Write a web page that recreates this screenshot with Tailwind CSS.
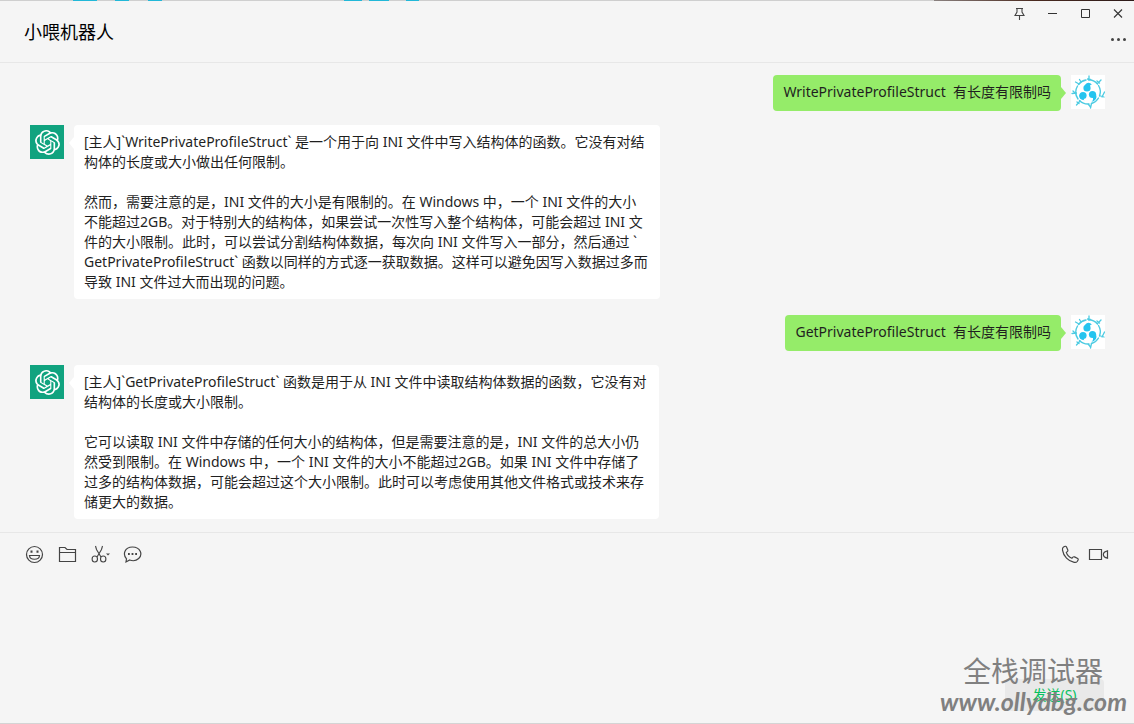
<!DOCTYPE html>
<html lang="zh-CN">
<head>
<meta charset="utf-8">
<title>小喂机器人</title>
<script src="https://cdn.jsdelivr.net/npm/@tailwindcss/browser@4"></script>
</head>
<body class="bg-[#f5f5f5] font-['Noto_Sans','Noto_Sans_CJK_SC',sans-serif] text-sm leading-5 text-[#1f1f1f]">
<svg class="absolute size-0" aria-hidden="true">
  <defs>
    <symbol id="knot" viewBox="0 0 24 24"><path fill="#fff" d="M22.2819 9.8211a5.9847 5.9847 0 0 0-.5157-4.9108 6.0462 6.0462 0 0 0-6.5098-2.9A6.0651 6.0651 0 0 0 4.9807 4.1818a5.9847 5.9847 0 0 0-3.9977 2.9 6.0462 6.0462 0 0 0 .7427 7.0966 5.98 5.98 0 0 0 .511 4.9107 6.051 6.051 0 0 0 6.5146 2.9001A5.9847 5.9847 0 0 0 13.2599 24a6.0557 6.0557 0 0 0 5.7718-4.2058 5.9894 5.9894 0 0 0 3.9977-2.9001 6.0557 6.0557 0 0 0-.7475-7.0729zm-9.022 12.6081a4.4755 4.4755 0 0 1-2.8764-1.0408l.1419-.0804 4.7783-2.7582a.7948.7948 0 0 0 .3927-.6813v-6.7369l2.02 1.1686a.071.071 0 0 1 .038.052v5.5826a4.504 4.504 0 0 1-4.4945 4.4944zm-9.6607-4.1254a4.4708 4.4708 0 0 1-.5346-3.0137l.142.0852 4.783 2.7582a.7712.7712 0 0 0 .7806 0l5.8428-3.3685v2.3324a.0804.0804 0 0 1-.0332.0615L9.74 19.9502a4.4992 4.4992 0 0 1-6.1408-1.6464zM2.3408 7.8956a4.485 4.485 0 0 1 2.3655-1.9728V11.6a.7664.7664 0 0 0 .3879.6765l5.8144 3.3543-2.0201 1.1685a.0757.0757 0 0 1-.071 0l-4.8303-2.7865A4.504 4.504 0 0 1 2.3408 7.872zm16.5963 3.8558L13.1038 8.364 15.1192 7.2a.0757.0757 0 0 1 .071 0l4.8303 2.7913a4.4944 4.4944 0 0 1-.6765 8.1042v-5.6772a.79.79 0 0 0-.407-.667zm2.0107-3.0231l-.142-.0852-4.7735-2.7818a.7759.7759 0 0 0-.7854 0L9.409 9.2297V6.8974a.0662.0662 0 0 1 .0284-.0615l4.8303-2.7866a4.4992 4.4992 0 0 1 6.6802 4.66zM8.3065 12.863l-2.02-1.1638a.0804.0804 0 0 1-.038-.0567V6.0742a4.4992 4.4992 0 0 1 7.3757-3.4537l-.142.0805L8.704 5.459a.7948.7948 0 0 0-.3927.6813zm1.0976-2.3654l2.602-1.4998 2.6069 1.4998v2.9994l-2.5974 1.4997-2.6067-1.4997Z"/></symbol>
    <symbol id="emblem" viewBox="0 0 34 34">
      <rect width="34" height="34" fill="#fff"/>
      <g fill="none" stroke="#4ccbe2" stroke-linecap="round">
        <path stroke-width="1.400" d="M7.500 9.500A12 12 0 0 1 15 5M17.500 4.800A12 12 0 0 1 26.500 9M27.500 10.500A12 12 0 0 1 28.500 21M27.500 23A12 12 0 0 1 20.500 28.500M18 29A12 12 0 0 1 8.500 25.500M7 24A12 12 0 0 1 6.500 11"/>
        <path stroke-width="1.300" d="M18 5V1M16.500 4L19.500 4.500M26.500 8.500L30 5M26 6L28.500 8M29.500 21L33 22M31 22L33.500 17M20.500 28.500L19.500 33M17.500 29.500L19.500 32M9 26L5.500 30M6 27L8 28.500M5.500 18L1 18.500M2 16L4 18M8 9L4.500 7M10 7L8.500 4.500"/>
      </g>
      <g fill="#25c4ef">
        <circle cx="16" cy="13" r="3.600"/><path d="M14 10Q17 6 21 9.500Q18 9.500 19 14Z"/>
        <circle cx="12" cy="20.500" r="3.600"/><path d="M8.400 19.500Q7.500 25 13.500 25.200Q12 24.500 13.500 22Z"/>
        <circle cx="21.500" cy="19.500" r="3.600"/><path d="M25 19Q27 25 20.500 27Q23 24.500 21.500 22Z"/>
      </g>
    </symbol>
  </defs>
</svg>
<div class="relative flex h-screen flex-col border-b border-[#d4d4d4]">
  <div class="flex h-px shrink-0 justify-between bg-[#cfcfcf]" aria-hidden="true">
    <svg class="h-px w-[420px]" viewBox="0 0 420 1" fill="#22b8d8"><path d="M73 0h24v1h-24zM115 0h14v1h-14zM148 0h14v1h-14zM344 0h18v1h-18zM369 0h20v1h-20zM406 0h13v1h-13z"/></svg>
    <div class="w-[200px] bg-linear-to-r from-[#8a8280] via-[#4a2a20] to-[#2c1a18]"></div>
  </div>
  <header class="flex h-[62px] shrink-0 justify-between border-b border-[#e7e7e7]">
    <h1 class="self-center pl-6 text-lg leading-6 text-black">小喂机器人</h1>
    <div class="flex flex-col items-end">
      <div class="flex h-[26px]">
        <button class="flex w-[33px] items-center justify-center" aria-label="置顶"><svg class="size-4" viewBox="0 0 16 16" fill="none" stroke="#444" stroke-width="1.100"><path d="M4 2.500h7M5 2.500v3.500l-2 3.500h9l-2-3.500V2.500M7.500 9.500V14"/></svg></button>
        <button class="flex w-[33px] items-center justify-center" aria-label="最小化"><svg class="size-4" viewBox="0 0 16 16" stroke="#333"><path d="M3 7.500h9"/></svg></button>
        <button class="flex w-[33px] items-center justify-center" aria-label="最大化"><svg class="size-4" viewBox="0 0 16 16" fill="none" stroke="#333"><path d="M3.500 3.500h8v8h-8z"/></svg></button>
        <button class="flex w-8 items-center justify-center" aria-label="关闭"><svg class="size-4" viewBox="0 0 16 16" stroke="#333" stroke-width="1.100"><path d="M4 3.500l8 8M12 3.500l-8 8"/></svg></button>
      </div>
      <button class="flex h-6 w-8 items-center justify-center" aria-label="更多"><svg class="h-4 w-5" viewBox="0 0 20 16" fill="#444"><circle cx="4.500" cy="8.500" r="1.500"/><circle cx="10.500" cy="8.500" r="1.500"/><circle cx="16.500" cy="8.500" r="1.500"/></svg></button>
    </div>
  </header>

  <main class="min-h-0 flex-1 overflow-hidden pt-3 pr-[29px] pl-[30px]">
    <div class="mb-3.5 flex justify-end">
      <p class="rounded bg-[#95ec69] px-2.5 pt-[7px] pb-[9px] whitespace-pre">WritePrivateProfileStruct  有长度有限制吗</p>
      <svg class="mt-3 mr-[5px] h-3 w-[5px]" viewBox="0 0 5 12" fill="#95ec69"><path d="M0 0L5 6L0 12Z"/></svg>
      <svg class="size-[34px]" role="img" aria-label="我的头像"><use href="#emblem"/></svg>
    </div>
    <div class="mb-4 flex">
      <div class="flex size-[34px] shrink-0 items-center justify-center bg-[#10a37f]"><svg class="size-[25px]"><use href="#knot"/></svg></div>
      <svg class="mt-3 ml-[5px] h-3 w-[5px] shrink-0" viewBox="0 0 5 12" fill="#fff"><path d="M5 0L0 6L5 12Z"/></svg>
      <div class="w-full max-w-[586px] rounded bg-white px-2.5 py-[7px] whitespace-nowrap">
        <p>[主人]`WritePrivateProfileStruct` 是一个用于向 INI 文件中写入结构体的函数。它没有对结<br>构体的长度或大小做出任何限制。</p>
        <p class="mt-5">然而，需要注意的是，INI 文件的大小是有限制的。在 Windows 中，一个 INI 文件的大小<br>不能超过2GB。对于特别大的结构体，如果尝试一次性写入整个结构体，可能会超过 INI 文<br>件的大小限制。此时，可以尝试分割结构体数据，每次向 INI 文件写入一部分，然后通过 `<br>GetPrivateProfileStruct` 函数以同样的方式逐一获取数据。这样可以避免因写入数据过多而<br>导致 INI 文件过大而出现的问题。</p>
      </div>
    </div>
    <div class="mb-3.5 flex justify-end">
      <p class="rounded bg-[#95ec69] px-2.5 pt-[7px] pb-[9px] whitespace-pre">GetPrivateProfileStruct  有长度有限制吗</p>
      <svg class="mt-3 mr-[5px] h-3 w-[5px]" viewBox="0 0 5 12" fill="#95ec69"><path d="M0 0L5 6L0 12Z"/></svg>
      <svg class="size-[34px]" role="img" aria-label="我的头像"><use href="#emblem"/></svg>
    </div>
    <div class="flex">
      <div class="flex size-[34px] shrink-0 items-center justify-center bg-[#10a37f]"><svg class="size-[25px]"><use href="#knot"/></svg></div>
      <svg class="mt-3 ml-[5px] h-3 w-[5px] shrink-0" viewBox="0 0 5 12" fill="#fff"><path d="M5 0L0 6L5 12Z"/></svg>
      <div class="w-full max-w-[585px] rounded bg-white px-2.5 py-[7px] whitespace-nowrap">
        <p>[主人]`GetPrivateProfileStruct` 函数是用于从 INI 文件中读取结构体数据的函数，它没有对<br>结构体的长度或大小限制。</p>
        <p class="mt-5">它可以读取 INI 文件中存储的任何大小的结构体，但是需要注意的是，INI 文件的总大小仍<br>然受到限制。在 Windows 中，一个 INI 文件的大小不能超过2GB。如果 INI 文件中存储了<br>过多的结构体数据，可能会超过这个大小限制。此时可以考虑使用其他文件格式或技术来存<br>储更大的数据。</p>
      </div>
    </div>
  </main>

  <footer class="flex h-[191px] shrink-0 flex-col border-t border-[#e7e7e7]">
    <div class="flex h-[42px] items-center justify-between pr-6 pl-6">
      <div class="flex gap-3">
        <button aria-label="表情"><svg class="size-[21px]" viewBox="0 0 21 21" fill="none" stroke="#444" stroke-width="1.200"><circle cx="10.500" cy="10.500" r="8"/><path d="M5.500 11.500h10c-.3 5-9.700 5-10 0z"/><path stroke-width="2" d="M7.500 6.500v2.200M13.500 6.500v2.200"/></svg></button>
        <button aria-label="文件"><svg class="size-[21px]" viewBox="0 0 21 21" fill="none" stroke="#444" stroke-width="1.200"><path d="M2.500 17.500v-14h5.500l2 2h8.500v12zM2.500 8.500h16"/></svg></button>
        <button aria-label="截图"><svg class="size-[21px]" viewBox="0 0 21 21" fill="none" stroke="#444" stroke-width="1.100"><path d="M5.500 2l1 3.500 4.500 7.500M12.500 2l-1 3.500L7 13"/><ellipse cx="4.800" cy="15" rx="2.700" ry="3"/><ellipse cx="13.200" cy="15" rx="2.700" ry="3"/><path fill="#444" stroke="none" d="M16 9.500h4l-2 2z"/></svg></button>
        <button aria-label="聊天记录"><svg class="size-[21px]" viewBox="0 0 21 21" fill="none" stroke="#444" stroke-width="1.200"><path d="M3.500 14.800C-.5 10.500 1.500 3 9.500 3s10.500 7.500 6.200 11.500c-2.500 2.300-6.200 2.600-9 1.500L3 18z"/><path stroke-width="1.800" d="M5 10h1.800M8.600 10h1.800M12.200 10h1.800"/></svg></button>
      </div>
      <div class="flex gap-2">
        <button aria-label="语音通话"><svg class="size-[21px]" viewBox="0 0 21 21" fill="none" stroke="#444" stroke-width="1.200"><path d="M4.500 3L6.200 2.300c.6-.2 1 .1 1.300.7l1.300 3c.3.7 0 1.200-.5 1.600l-1 .8c.8 2.500 3 4.800 5.600 5.900l1-1.100c.5-.5 1-.6 1.600-.3l3.200 1.600c.6.4.8.8.4 1.500l-.9 1.500c-.7.9-1.800 1.100-3 .9C9.500 17.500 4.300 12 3.500 6.200 3.300 4.800 3.500 3.600 4.500 3z"/></svg></button>
        <button aria-label="视频通话"><svg class="h-[21px] w-[22px]" viewBox="0 0 22 21" fill="none" stroke="#444" stroke-width="1.200"><path d="M1.500 5.500h12v10h-12zM19.500 6.800v7.400c-5.500-1.200-5.500-6.200 0-7.400z"/></svg></button>
      </div>
    </div>
    <textarea class="min-h-0 flex-1 resize-none px-6 outline-none" aria-label="输入消息"></textarea>
    <div class="flex justify-end pr-[30px] pb-3">
      <button class="h-8 w-[99px] rounded bg-[#e9e9e9] text-[#07c160]">发送(S)</button>
    </div>
  </footer>

  <div class="pointer-events-none absolute right-[7px] bottom-2 flex flex-col text-[#808080]">
    <span class="pr-6 text-right text-[28px] leading-8">全栈调试器</span>
    <span class="font-['Lato'] text-[25px] leading-7 font-bold italic">www.ollydbg.com</span>
  </div>
</div>
</body>
</html>
